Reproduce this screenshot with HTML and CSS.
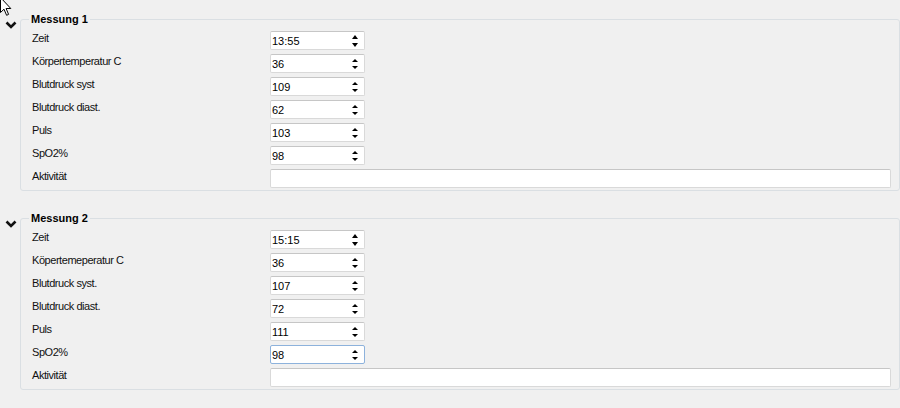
FILE: index.html
```html
<!DOCTYPE html>
<html lang="de">
<head>
  <meta charset="UTF-8" />
  <title>Messungen</title>
  <link rel="stylesheet" href="styles.css">
</head>
<body>

<svg class="cursor" width="14" height="20" viewBox="0 0 14 20">
  <path d="M1.5 0.5 L1.5 15.5 L5 12.2 L7.6 18.3 L9.6 17.4 L7.1 11.5 L11.8 11.5 Z" fill="#fff" stroke="#000" stroke-width="1" stroke-linejoin="miter"/>
</svg>

<div class="form">

  <section class="group">
    <span class="chevron">
      <svg width="12" height="8" viewBox="0 0 12 8"><path d="M1.5 1.5 L6 6 L10.5 1.5" fill="none" stroke="#111" stroke-width="2.6"/></svg>
    </span>
    <fieldset class="box">
      <legend>Messung 1</legend>
      <div class="rows">
        <label>Zeit</label>
        <div class="spin"><input type="text" value="13:55" readonly><span class="arrows bold"><i class="up"></i><i class="down"></i></span></div>
        <label>Körpertemperatur C</label>
        <div class="spin"><input type="text" value="36" readonly><span class="arrows"><i class="up"></i><i class="down"></i></span></div>
        <label>Blutdruck syst</label>
        <div class="spin"><input type="text" value="109" readonly><span class="arrows"><i class="up"></i><i class="down"></i></span></div>
        <label>Blutdruck diast.</label>
        <div class="spin"><input type="text" value="62" readonly><span class="arrows"><i class="up"></i><i class="down"></i></span></div>
        <label>Puls</label>
        <div class="spin"><input type="text" value="103" readonly><span class="arrows"><i class="up"></i><i class="down"></i></span></div>
        <label>SpO2%</label>
        <div class="spin"><input type="text" value="98" readonly><span class="arrows"><i class="up"></i><i class="down"></i></span></div>
        <label>Aktivität</label>
        <div class="text"><input type="text" value="" readonly></div>
      </div>
    </fieldset>
  </section>

  <section class="group">
    <span class="chevron">
      <svg width="12" height="8" viewBox="0 0 12 8"><path d="M1.5 1.5 L6 6 L10.5 1.5" fill="none" stroke="#111" stroke-width="2.6"/></svg>
    </span>
    <fieldset class="box">
      <legend>Messung 2</legend>
      <div class="rows">
        <label>Zeit</label>
        <div class="spin"><input type="text" value="15:15" readonly><span class="arrows bold"><i class="up"></i><i class="down"></i></span></div>
        <label>Köpertemeperatur C</label>
        <div class="spin"><input type="text" value="36" readonly><span class="arrows"><i class="up"></i><i class="down"></i></span></div>
        <label>Blutdruck syst.</label>
        <div class="spin"><input type="text" value="107" readonly><span class="arrows"><i class="up"></i><i class="down"></i></span></div>
        <label>Blutdruck diast.</label>
        <div class="spin"><input type="text" value="72" readonly><span class="arrows"><i class="up"></i><i class="down"></i></span></div>
        <label>Puls</label>
        <div class="spin"><input type="text" value="111" readonly><span class="arrows"><i class="up"></i><i class="down"></i></span></div>
        <label>SpO2%</label>
        <div class="spin focus"><input type="text" value="98" readonly><span class="arrows"><i class="up"></i><i class="down"></i></span></div>
        <label>Aktivität</label>
        <div class="text"><input type="text" value="" readonly></div>
      </div>
    </fieldset>
  </section>

</div>

</body>
</html>
```

FILE: styles.css
```css
body {
  margin: 0;
  background: #f0f0f0;
  font-family: "Liberation Sans", Arial, sans-serif;
  color: #000;
  overflow: hidden;
}
.cursor {
  position: absolute;
  left: -1px;
  top: -3px;
  z-index: 5;
}
.form {
  padding-top: 12px;
}
.group {
  display: flex;
  margin-bottom: 20px;
}
.chevron {
  width: 20px;
  padding: 9px 0 0 5px;
  box-sizing: border-box;
}
.chevron svg {
  display: block;
}
.box {
  flex: 1;
  margin: 0;
  padding: 5px 8px 2px 11px;
  border: 1px solid #dadfe3;
  border-radius: 3px;
  min-width: 0;
}
.box legend {
  font-size: 11px;
  font-weight: bold;
  line-height: 14px;
  padding: 0 2px;
  margin-left: -3px;
}
.rows {
  display: grid;
  grid-template-columns: 238px 1fr;
  grid-auto-rows: 19px;
  row-gap: 4px;
}
.rows label {
  font-size: 11px;
  letter-spacing: -0.45px;
  line-height: 13px;
  padding-top: 1px;
  color: #111;
}
.spin, .text {
  display: flex;
  align-items: center;
  background: #fff;
  border: 1px solid #d9d9d9;
  border-top-color: #c6c6c6;
  border-radius: 2px;
  box-sizing: border-box;
  height: 19px;
}
.spin {
  width: 95px;
}
.spin.focus {
  border-color: #8db2dc;
}
.spin input, .text input {
  flex: 1;
  min-width: 0;
  border: none;
  outline: none;
  background: transparent;
  font-family: "Liberation Sans", Arial, sans-serif;
  font-size: 11px;
  color: #000;
  padding: 0 0 0 1px;
  margin: 0;
  height: 15px;
}
.arrows {
  display: flex;
  flex-direction: column;
  gap: 4px;
  margin-right: 6px;
}
.arrows i {
  display: block;
  width: 0;
  height: 0;
  border-left: 3px solid transparent;
  border-right: 3px solid transparent;
}
.arrows .up {
  border-bottom: 3px solid #000;
}
.arrows .down {
  border-top: 3px solid #000;
}
.arrows.bold i {
  border-left-width: 3.5px;
  border-right-width: 3.5px;
}
.arrows.bold .up {
  border-bottom-width: 4px;
}
.arrows.bold .down {
  border-top-width: 4px;
}
```
